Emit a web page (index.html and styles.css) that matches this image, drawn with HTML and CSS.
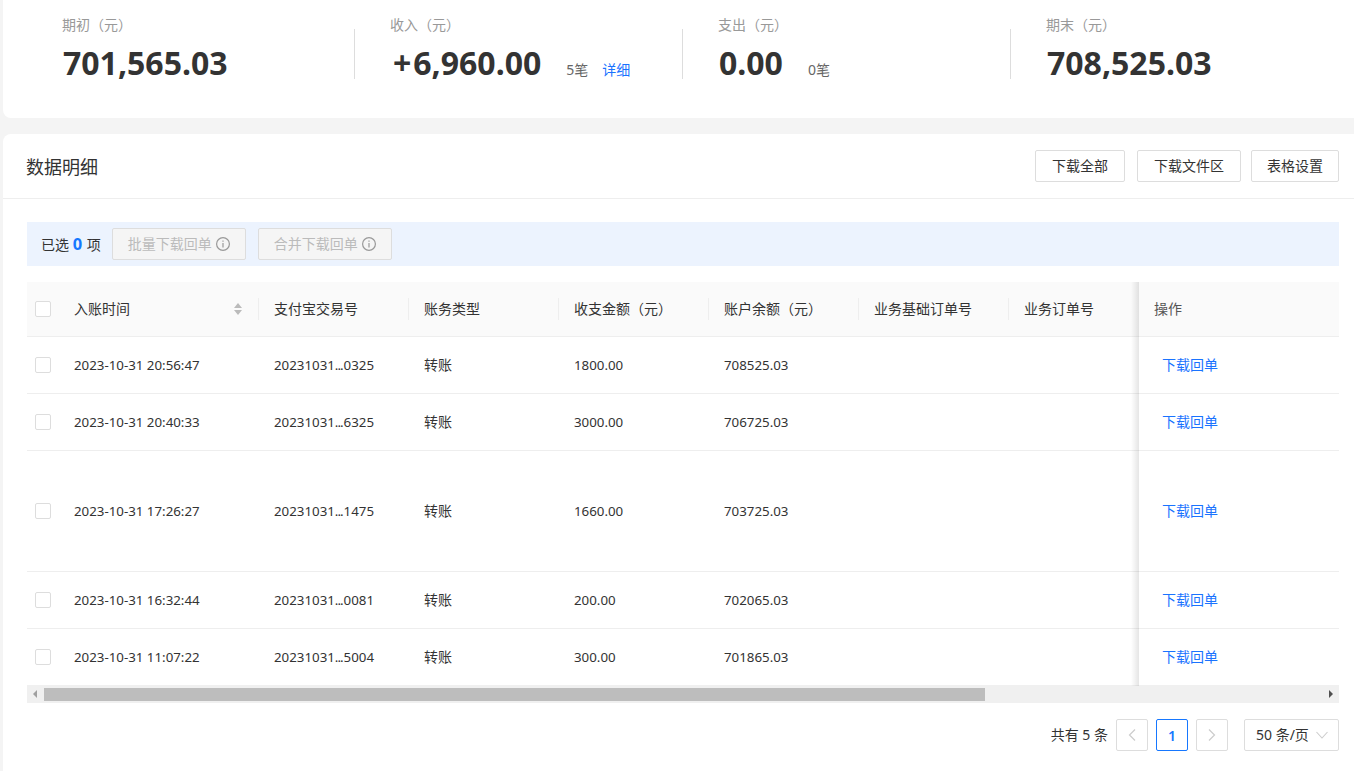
FILE: index.html
```html
<!DOCTYPE html>
<html lang="zh-CN">
<head>
  <meta charset="UTF-8" />
  <title>数据明细</title>
  <link rel="stylesheet" href="styles.css">
</head>
<body>

  <!-- 汇总 -->
  <div class="summary">
    <div class="stat">
      <div class="stat-label">期初（元）</div>
      <div class="stat-row"><span class="stat-value">701,565.03</span></div>
    </div>
    <div class="stat">
      <div class="stat-label">收入（元）</div>
      <div class="stat-row">
        <span class="stat-value"><span class="plus">+</span>6,960.00</span>
        <span class="stat-count">5笔</span>
        <a class="stat-link" href="#">详细</a>
      </div>
    </div>
    <div class="stat">
      <div class="stat-label">支出（元）</div>
      <div class="stat-row">
        <span class="stat-value">0.00</span>
        <span class="stat-count">0笔</span>
      </div>
    </div>
    <div class="stat stat-last">
      <div class="stat-label">期末（元）</div>
      <div class="stat-row"><span class="stat-value">708,525.03</span></div>
    </div>
  </div>

  <!-- 数据明细 -->
  <div class="panel">
    <div class="panel-head">
      <h2>数据明细</h2>
      <div class="panel-actions">
        <button class="btn btn-all">下载全部</button>
        <button class="btn btn-area">下载文件区</button>
        <button class="btn btn-set">表格设置</button>
      </div>
    </div>

    <div class="panel-body">
      <div class="select-bar">
        <span class="select-text">已选 <b>0</b> 项</span>
        <button class="btn-off">批量下载回单
          <svg class="info" viewBox="0 0 14 14"><circle cx="7" cy="7" r="6.4" /><path d="M7 6v4.6M7 3.4v1.4" /></svg>
        </button>
        <button class="btn-off">合并下载回单
          <svg class="info" viewBox="0 0 14 14"><circle cx="7" cy="7" r="6.4" /><path d="M7 6v4.6M7 3.4v1.4" /></svg>
        </button>
      </div>

      <table class="grid">
        <colgroup>
          <col class="col-check"><col class="col-time">
          <col class="col-std"><col class="col-std"><col class="col-std"><col class="col-std"><col class="col-std">
          <col class="col-last"><col class="col-op">
        </colgroup>
        <thead>
          <tr>
            <th><span class="check"></span></th>
            <th class="sep">
              <div class="th-sort">入账时间
                <svg class="sort" viewBox="0 0 10 14"><path d="M5 1l4 5H1zM5 13L1 8h8z" /></svg>
              </div>
            </th>
            <th class="sep">支付宝交易号</th>
            <th class="sep">账务类型</th>
            <th class="sep">收支金额（元）</th>
            <th class="sep">账户余额（元）</th>
            <th class="sep">业务基础订单号</th>
            <th>业务订单号</th>
            <th class="op">操作</th>
          </tr>
        </thead>
        <tbody id="rows"></tbody>
      </table>

      <div class="scrollbar">
        <svg class="arrow" viewBox="0 0 17 18"><path class="arrow-l" d="M6 9l4-4v8z" /></svg>
        <div class="scroll-track"><div class="scroll-thumb"></div></div>
        <svg class="arrow" viewBox="0 0 17 18"><path class="arrow-r" d="M11 9L7 5v8z" /></svg>
      </div>

      <div class="pager">
        <span class="pager-total">共有 5 条</span>
        <span class="page page-off">
          <svg viewBox="0 0 12 12"><path d="M9 .5L3.5 6 9 11.5" /></svg>
        </span>
        <span class="page page-on">1</span>
        <span class="page page-off">
          <svg viewBox="0 0 12 12"><path d="M3 .5L8.5 6 3 11.5" /></svg>
        </span>
        <span class="page-size"><span>50 条/页</span>
          <svg viewBox="0 0 12 12"><path d="M.5 3l5.5 6 5.5-6" /></svg>
        </span>
      </div>
    </div>
  </div>

  <script>
  const kayitlar = [
    { time: "2023-10-31 20:56:47", no: "0325", amount: "1800.00", balance: "708525.03" },
    { time: "2023-10-31 20:40:33", no: "6325", amount: "3000.00", balance: "706725.03" },
    { time: "2023-10-31 17:26:27", no: "1475", amount: "1660.00", balance: "703725.03", tall: true },
    { time: "2023-10-31 16:32:44", no: "0081", amount: "200.00", balance: "702065.03" },
    { time: "2023-10-31 11:07:22", no: "5004", amount: "300.00", balance: "701865.03" }
  ];

  const rows = document.getElementById("rows");
  kayitlar.forEach((k) => {
    const tr = document.createElement("tr");
    if (k.tall) tr.className = "tall";
    tr.innerHTML = `
      <td><span class="check"></span></td>
      <td class="num">${k.time}</td>
      <td class="num">20231031<span class="dots">...</span>${k.no}</td>
      <td class="cjk">转账</td>
      <td class="num">${k.amount}</td>
      <td class="num">${k.balance}</td>
      <td></td>
      <td></td>
      <td class="op cjk"><a href="#">下载回单</a></td>
    `;
    rows.appendChild(tr);
  });
  </script>
</body>
</html>
```

FILE: styles.css
```css
/* Genel */
body {
  margin: 0;
  padding: 0 0 0 3px;
  background: #f4f4f4;
  color: #333;
  font-family: "Noto Sans", "Noto Sans CJK SC", sans-serif;
  font-size: 14px;
  overflow: hidden;
}
a {
  color: #1a73ff;
  text-decoration: none;
}
button {
  font-family: inherit;
}

/* Summary */
.summary {
  display: grid;
  grid-template-columns: repeat(4, 328px);
  height: 118px;
  padding-left: 24px;
  box-sizing: border-box;
  background: #fff;
  border-radius: 0 0 0 8px;
}
.stat {
  position: relative;
  padding: 15px 0 0 35px;
}
.stat::after {
  content: "";
  position: absolute;
  top: 29px;
  right: 0;
  width: 1px;
  height: 50px;
  background: #ddd;
}
.stat-last::after {
  display: none;
}
.stat-label {
  color: #999;
  line-height: 20px;
}
.stat-row {
  display: flex;
  align-items: baseline;
  margin-top: 5px;
  padding-left: 1px;
}
.stat-value {
  color: #333;
  font-size: 32px;
  font-weight: 700;
  line-height: 46px;
}
.plus {
  margin: 0 2px 0 2px;
}
.stat-count {
  margin-left: 25px;
  color: #666;
}
.stat-link {
  margin-left: 14px;
}

/* Panel */
.panel {
  height: 637px;
  margin-top: 16px;
  background: #fff;
  border-radius: 8px 0 0 0;
}
.panel-head {
  display: flex;
  justify-content: space-between;
  align-items: center;
  height: 64px;
  padding: 0 15px 0 23px;
  border-bottom: 1px solid #eee;
}
.panel-head h2 {
  margin: 0;
  color: #333;
  font-size: 18px;
  font-weight: 400;
}
.panel-actions {
  display: flex;
  gap: 12px;
}
.btn {
  width: 90px;
  height: 32px;
  padding: 0 0 2px;
  background: #fff;
  border: 1px solid #ddd;
  border-radius: 2px;
  color: #333;
  font-size: 14px;
}
.btn-area {
  width: 104px;
}
.btn-set {
  width: 88px;
  margin-left: -2px;
}
.panel-body {
  padding: 23px 15px 0 24px;
}

/* Select bar */
.select-bar {
  display: flex;
  align-items: center;
  height: 44px;
  padding-left: 14px;
  background: #ecf3fe;
}
.select-text {
  color: #333;
  margin-right: 11px;
  padding-bottom: 1px;
}
.select-text b {
  color: #1677ff;
  font-size: 16.5px;
  margin: 0 1px 0 0;
}
.btn-off {
  display: flex;
  align-items: center;
  justify-content: center;
  gap: 4px;
  width: 134px;
  height: 32px;
  margin-right: 12px;
  padding: 0 0 2px;
  background: #f5f5f5;
  border: 1px solid #ddd;
  border-radius: 2px;
  color: #bbb;
  font-size: 14px;
}
.info {
  width: 14px;
  height: 14px;
  margin-top: 2px;
  fill: none;
  stroke: #999;
  stroke-width: 1.2;
}

/* Table */
.grid {
  width: 1312px;
  margin-top: 16px;
  border-collapse: collapse;
  table-layout: fixed;
  color: #333;
}
.col-check {
  width: 32px;
}
.col-time {
  width: 200px;
}
.col-std {
  width: 150px;
}
.col-last {
  width: 130px;
}
.col-op {
  width: 200px;
}
.grid th {
  position: relative;
  height: 52px;
  padding: 0 15px 2px;
  background: #fafafa;
  border-bottom: 1px solid #eee;
  font-weight: 400;
  text-align: left;
  white-space: nowrap;
}
.grid td {
  height: 56px;
  padding: 0 15px;
  border-bottom: 1px solid #eee;
}
.grid td.num {
  font-size: 13.3px;
}
.dots {
  letter-spacing: -1px;
  margin-right: 1px;
}
.grid tr:last-child td {
  border-bottom: 0;
}
.grid th:first-child,
.grid td:first-child {
  padding: 0 0 0 8px;
}
.grid th:first-child {
  height: 54px;
}
.grid .tall td {
  height: 120px;
}
.grid td.cjk {
  height: auto;
  padding-bottom: 2px;
}
.grid .sep::after {
  content: "";
  position: absolute;
  top: 16px;
  right: 0;
  width: 1px;
  height: 22px;
  background: #eee;
}
.th-sort {
  display: flex;
  justify-content: space-between;
  align-items: center;
  padding-right: 1px;
}
.sort {
  width: 10px;
  height: 14px;
  margin-top: 2px;
  fill: #bbb;
}
.check {
  display: block;
  width: 14px;
  height: 14px;
  background: #fff;
  border: 1px solid #ddd;
  border-radius: 2px;
}
.grid .op {
  position: relative;
  color: #555;
}
.grid .op::before {
  content: "";
  position: absolute;
  top: 0;
  bottom: -1px;
  left: -8px;
  width: 8px;
  background: linear-gradient(to right, rgba(0,0,0,0), rgba(0,0,0,0.1));
}
.grid td.op a {
  margin-left: 8px;
}

/* Scrollbar */
.scrollbar {
  display: flex;
  align-items: center;
  height: 18px;
  background: #f0f0f0;
}
.scroll-track {
  flex: 1;
  height: 13px;
}
.scroll-thumb {
  width: 941px;
  height: 13px;
  background: #bdbdbd;
}
.arrow {
  flex: none;
  width: 17px;
  height: 18px;
}
.arrow-l {
  fill: #a0a0a0;
}
.arrow-r {
  fill: #505050;
}

/* Pager */
.pager {
  display: flex;
  justify-content: flex-end;
  align-items: center;
  height: 32px;
  margin-top: 16px;
  color: #333;
}
.pager-total {
  margin-right: 8px;
  padding-bottom: 3px;
}
.page {
  display: flex;
  align-items: center;
  justify-content: center;
  box-sizing: border-box;
  width: 32px;
  height: 32px;
  margin-right: 8px;
  border: 1px solid #ddd;
  border-radius: 2px;
}
.page svg {
  width: 12px;
  height: 12px;
  fill: none;
  stroke: #ccc;
  stroke-width: 1.2;
}
.page-on {
  border-color: #1677ff;
  color: #1677ff;
  font-weight: 600;
}
.page-size {
  display: flex;
  align-items: center;
  justify-content: space-between;
  box-sizing: border-box;
  width: 95px;
  height: 32px;
  margin-left: 8px;
  padding: 0 10px 0 11px;
  border: 1px solid #ddd;
  border-radius: 2px;
}
.page-size span {
  padding-bottom: 3px;
}
.page-size svg {
  width: 12px;
  height: 12px;
  fill: none;
  stroke: #ccc;
  stroke-width: 1.1;
}
```
